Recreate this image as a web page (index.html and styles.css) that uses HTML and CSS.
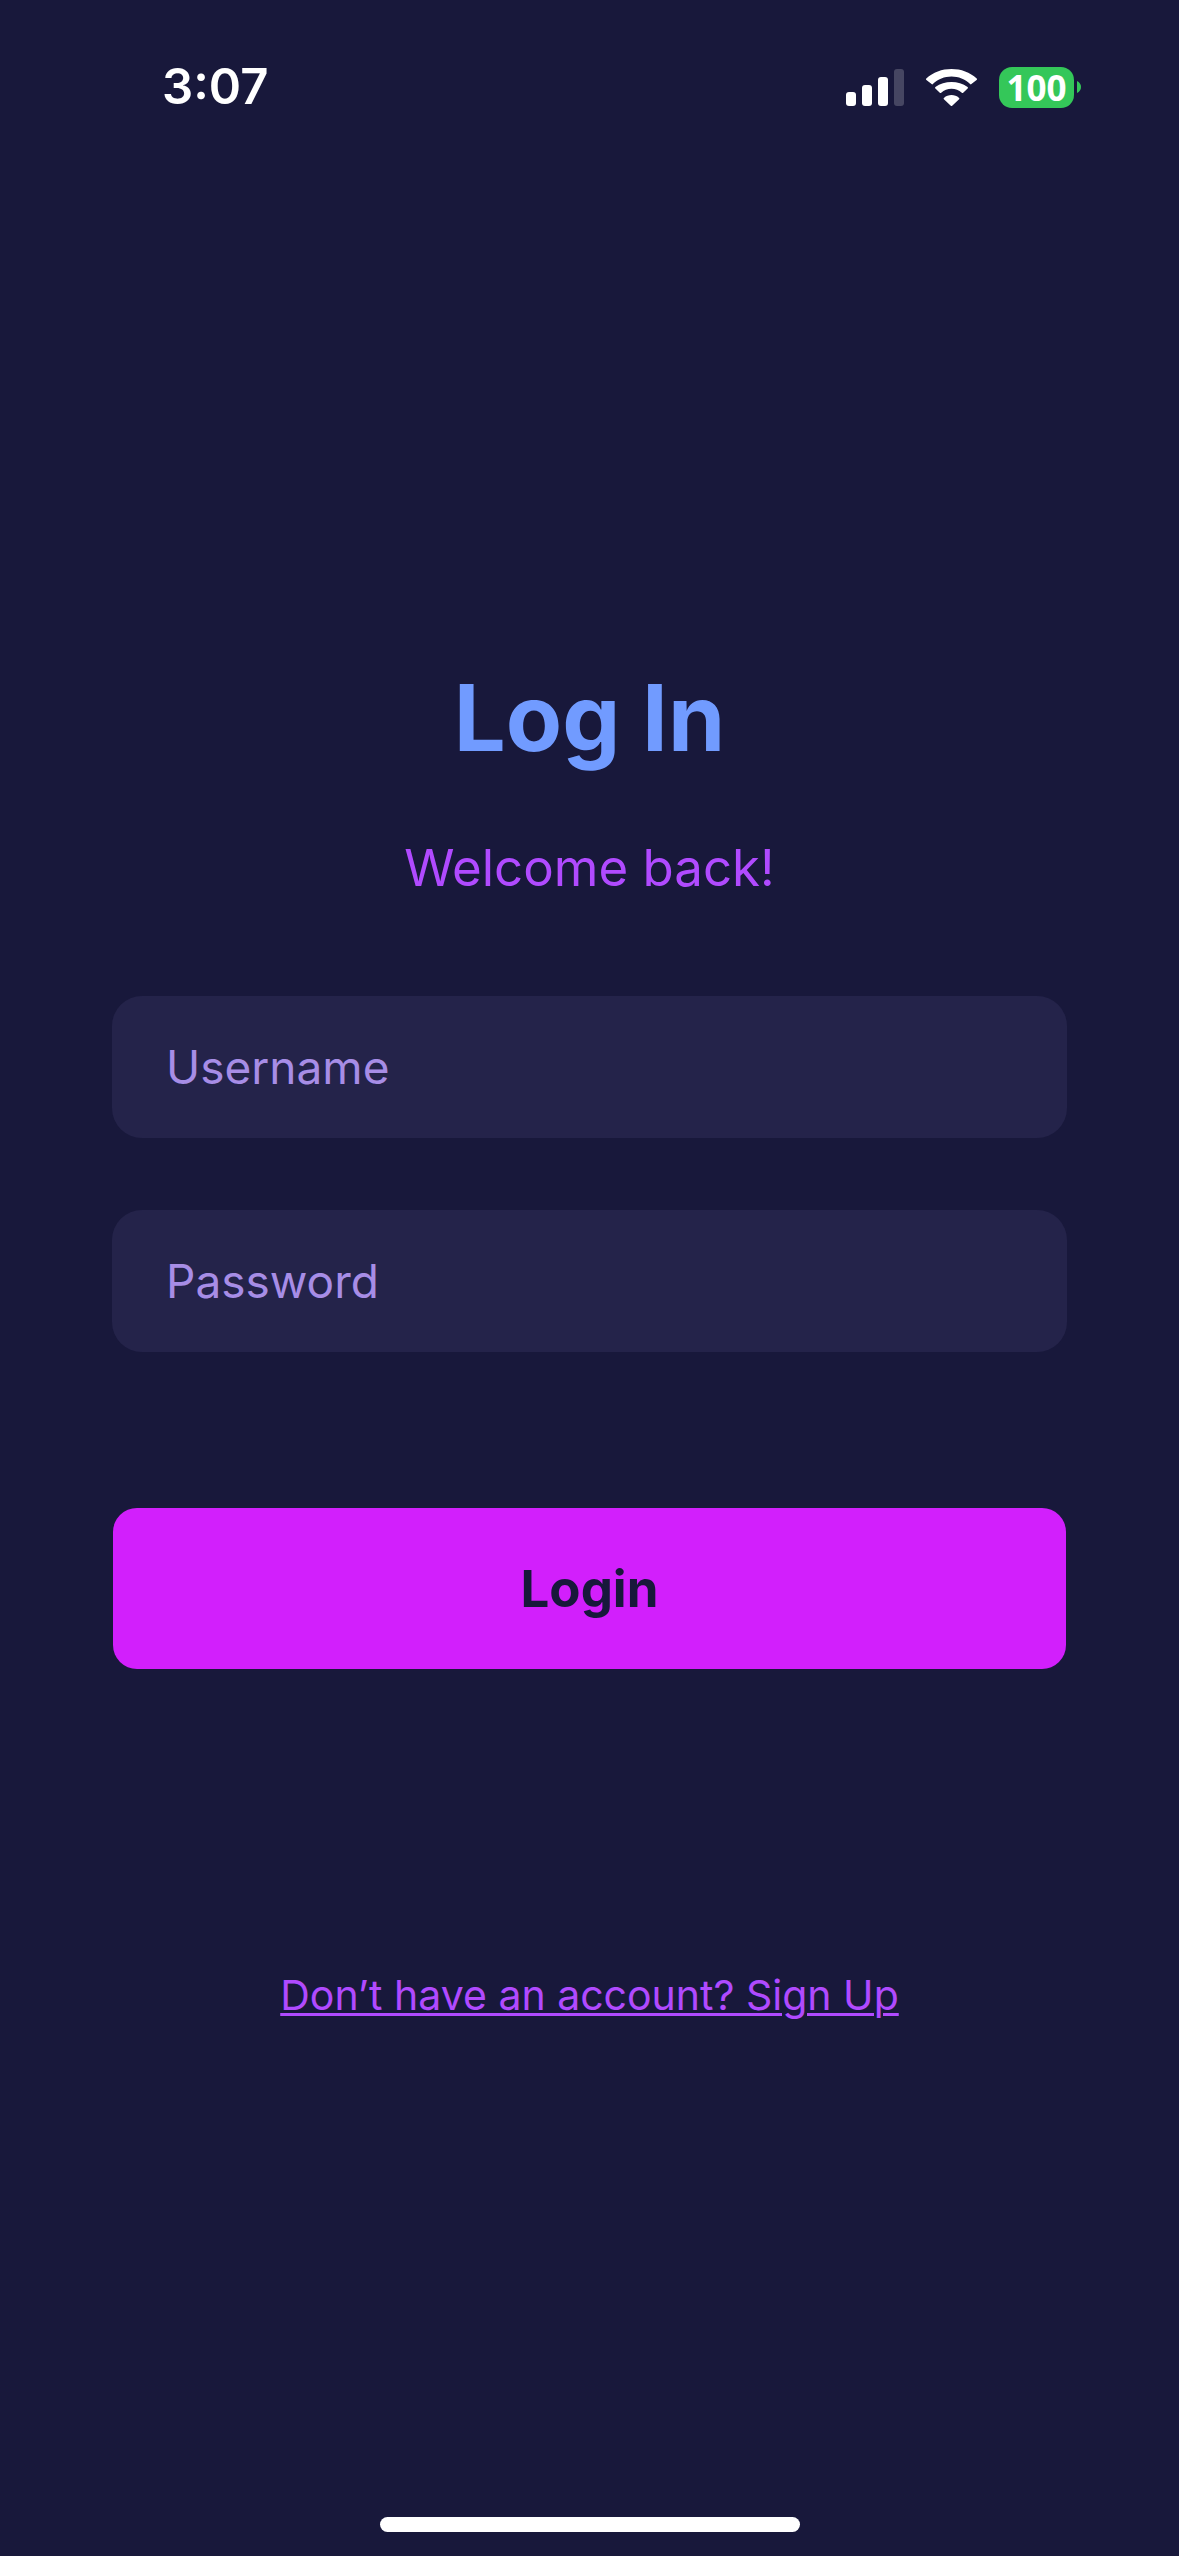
FILE: index.html
```html
<!DOCTYPE html>
<html lang="en">
<head>
  <meta charset="utf-8">
  <meta name="viewport" content="width=device-width, initial-scale=1">
  <title>Log In</title>
  <link rel="stylesheet" href="styles.css">
</head>
<body>
  <header class="status-bar">
    <time class="clock">3:07</time>
    <div class="indicators">
      <svg class="signal" width="58" height="37" viewBox="0 0 58 37" role="img" aria-label="Signal">
        <g fill="#fff">
          <rect x="0" y="23" width="10" height="14" rx="3"/>
          <rect x="16" y="16" width="10" height="21" rx="3"/>
          <rect x="32" y="8" width="10" height="29" rx="3"/>
          <rect x="48" y="0" width="10" height="37" rx="3" fill-opacity=".2"/>
        </g>
      </svg>
      <svg class="wifi" width="51" height="37" viewBox="0 0 51 37" role="img" aria-label="Wi-Fi">
        <g fill="#fff">
          <path d="M25.500 7.500c7 0 13.600 2.700 18.600 7.600.4.400 1 .4 1.300 0l5.200-4.200c.5-.4.500-1 .1-1.400C44 3.300 35 0 25.500 0S7 3.300.3 9.500c-.4.400-.4 1 .1 1.400l5.200 4.200c.3.400.9.400 1.300 0C11.900 10.200 18.500 7.500 25.500 7.500z"/>
          <path d="M25.500 19.800c3.800 0 7.500 1.400 10.300 4 .4.400 1 .4 1.400 0l4.400-4.200c.5-.4.500-1 0-1.500-9.100-6.700-23.100-6.700-32.200 0-.5.500-.5 1.100 0 1.500l4.400 4.200c.4.400 1 .4 1.400 0 2.800-2.600 6.500-4 10.300-4z"/>
          <path d="M33.100 28.900c.4.400.4 1 0 1.400l-6.900 6.400c-.4.400-1 .4-1.400 0l-6.900-6.400c-.4-.4-.4-1 0-1.400 4.400-3.800 10.800-3.800 15.200 0z"/>
        </g>
      </svg>
      <div class="battery">
        <span class="battery-level">100</span>
        <svg width="4" height="12" viewBox="0 0 4 12" aria-hidden="true"><path fill="#34c759" d="M0 0c2.500 1 4 3.400 4 6s-1.500 5-4 6z"/></svg>
      </div>
    </div>
  </header>

  <main class="login">
    <h1 class="title">Log In</h1>
    <p class="subtitle">Welcome back!</p>
    <form class="form">
      <input class="field" type="text" name="username" placeholder="Username" aria-label="Username" autocomplete="username">
      <input class="field" type="password" name="password" placeholder="Password" aria-label="Password" autocomplete="current-password">
      <button class="submit" type="submit">Login</button>
    </form>
    <a class="signup" href="#signup">Don’t have an account? Sign Up</a>
  </main>

  <footer class="home-area"><div class="home-indicator"></div></footer>
</body>
</html>
```
FILE: styles.css
```css
*,
*::before,
*::after {
  box-sizing: border-box;
}

body {
  display: flex;
  flex-direction: column;
  min-height: 100vh;
  margin: 0;
  background: #18183b;
  color: #fff;
  font-family: Inter, "Liberation Sans", sans-serif;
}

.status-bar {
  display: flex;
  align-items: center;
  justify-content: space-between;
  padding: 55px 98px 0 162px;
}

.clock {
  font-size: 49px;
  font-weight: 600;
  line-height: 64px;
}

.indicators {
  display: flex;
  align-items: center;
  gap: 22px;
}

.battery {
  display: flex;
  align-items: center;
  gap: 3px;
}

.battery-level {
  width: 75px;
  border-radius: 13px;
  background: #34c759;
  font-family: "Open Sans", sans-serif;
  font-size: 35px;
  font-weight: 700;
  line-height: 41px;
  text-align: center;
}

.login {
  display: flex;
  flex: 1;
  flex-direction: column;
  align-items: center;
  padding: 541px 112px 0;
}

.title {
  margin: 0 0 60px;
  color: #719bff;
  font-size: 92px;
  font-weight: 700;
  line-height: 116px;
}

.subtitle {
  margin: 0 0 96px;
  color: #b04aff;
  font-size: 51px;
  line-height: 64px;
}

.form {
  display: flex;
  flex-direction: column;
  gap: 72px;
  width: 100%;
}

.field {
  width: 100%;
  height: 142px;
  padding: 0 54px;
  border: 0;
  border-radius: 30px;
  background: #24234a;
  color: #fff;
  font: inherit;
  font-size: 46px;
}

.field::placeholder {
  color: #a78de6;
  opacity: 1;
}

.submit {
  margin: 84px 1px 0;
  padding: 48px;
  border: 0;
  border-radius: 24px;
  background: #d21ffc;
  color: #18183b;
  font: inherit;
  font-size: 51px;
  font-weight: 700;
  line-height: 65px;
}

.signup {
  margin-top: 300px;
  color: #b04aff;
  font-size: 41px;
  line-height: 52px;
  text-decoration-thickness: 3px;
  text-underline-offset: 3px;
}

.home-area {
  padding: 24px;
}

.home-indicator {
  width: 420px;
  max-width: 100%;
  height: 15px;
  margin: 0 auto;
  border-radius: 8px;
  background: #fff;
}
```
